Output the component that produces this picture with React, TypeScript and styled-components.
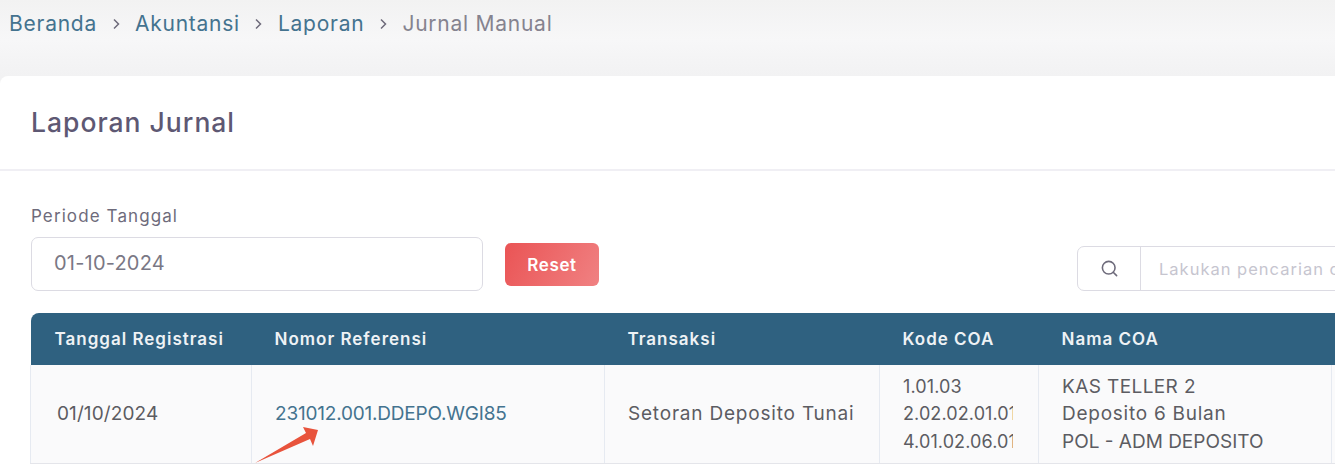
import React from "react";
import styled, { createGlobalStyle } from "styled-components";

const Global = createGlobalStyle`
  html, body { margin: 0; padding: 0; height: 464px; overflow: hidden; }
  body { font-family: Inter, "Open Sans", "Liberation Sans", sans-serif; background: #f5f6f6; }
  #root { width: 1335px; height: 464px; overflow: hidden; }
`;

const Page = styled.div`
  width: 1335px;
  height: 464px;
  overflow: hidden;
  background: linear-gradient(180deg, #f2f2f2 0%, #f7f7f8 40px, #f2f2f3 76px);
`;

const Crumbs = styled.nav`
  height: 76px;
  box-sizing: border-box;
  padding: 13px 0 0 9px;
  display: flex;
  align-items: flex-start;
  line-height: 22px;
`;

const Crumb = styled.span<{ $current?: boolean }>`
  color: ${(p) => (p.$current ? "#85838f" : "#44738f")};
  font-size: 21px;
  letter-spacing: 0.75px;
`;

const Sep = styled.span`
  width: 38px;
  display: flex;
  justify-content: center;
  align-items: center;
  height: 22px;
  color: #6e6b7b;
`;

const Card = styled.section`
  width: 1400px;
  background: #fff;
  border-radius: 8px 0 0 0;
  height: 388px;
`;

const CardHead = styled.header`
  height: 93px;
  border-bottom: 2px solid #f0eff4;
  padding-left: 31px;
  display: flex;
  align-items: center;
`;

const Title = styled.h1`
  margin: 0 0 2px;
  font-size: 26.5px;
  font-weight: 500;
  color: #5e5873;
  letter-spacing: 1px;
`;

const Body = styled.div`
  padding: 35px 0 0 30px;
`;

const FilterRow = styled.div`
  display: flex;
  align-items: flex-start;
`;

const Field = styled.div`
  margin-left: 1px;
  width: 452px;
  flex: none;
`;

const Label = styled.label`
  display: block;
  font-size: 17px;
  line-height: 20px;
  color: #6e6b7b;
  margin-bottom: 11px;
  letter-spacing: 1.1px;
`;

const DateInput = styled.div`
  box-sizing: border-box;
  height: 54px;
  border: 1.5px solid #dcdbe3;
  border-radius: 7px;
  padding: 0 0 2px 22px;
  display: flex;
  align-items: center;
  font-size: 20px;
  letter-spacing: 0.2px;
  color: #7a7885;
`;

const ResetButton = styled.button`
  margin: 37px 0 0 22px;
  width: 94px;
  height: 43px;
  flex: none;
  border: 0;
  border-radius: 6px;
  background: linear-gradient(118deg, #ea5455 0%, #f08182 100%);
  color: #fff;
  font-family: inherit;
  font-size: 17px;
  font-weight: 600;
  letter-spacing: 0.6px;
  padding: 0;
`;

const SearchGroup = styled.div`
  margin: 40px 0 0 478px;
  width: 400px;
  height: 45px;
  flex: none;
  box-sizing: border-box;
  border: 1.5px solid #dcdbe3;
  border-radius: 7px;
  display: flex;
  align-items: stretch;
`;

const SearchIcon = styled.div`
  width: 62px;
  flex: none;
  border-right: 1.5px solid #dcdbe3;
  display: flex;
  align-items: center;
  justify-content: center;
  color: #6e6b7b;
`;

const SearchText = styled.div`
  padding-left: 18px;
  display: flex;
  align-items: center;
  font-size: 16.5px;
  letter-spacing: 1px;
  color: #c6c5cf;
  white-space: nowrap;
`;

const TableWrap = styled.div`
  position: relative;
  margin-top: 22px;
`;

const Table = styled.table`
  table-layout: fixed;
  width: 1370px;
  border-collapse: collapse;
`;

const HeadRow = styled.tr`
  height: 52px;
  background: #2f6180;
`;

const Th = styled.th<{ $w: number }>`
  width: ${(p) => p.$w}px;
  padding: 0 0 0 23px;
  text-align: left;
  color: #eef2f5;
  font-size: 17px;
  font-weight: 600;
  letter-spacing: 1px;
  white-space: nowrap;
  box-sizing: border-box;
  &:first-child { border-top-left-radius: 8px; padding-left: 24px; }
`;

const Tr = styled.tr`
  height: 99px;
  background: #fafafb;
  border-bottom: 2px solid #e4e5ea;
`;

const Td = styled.td<{ $link?: boolean }>`
  padding: 0 23px;
  border-left: 1.5px solid #e6eaf1;
  font-size: 19px;
  line-height: 27.5px;
  color: ${(p) => (p.$link ? "#44738f" : "#5c5c62")};
  white-space: nowrap;
  overflow: hidden;
  box-sizing: border-box;
  &:first-child { padding-left: 26px; }
`;

const Line = styled.div<{ $ls: number }>`
  letter-spacing: ${(p) => p.$ls}px;
`;

const Clip = styled.div`
  width: 110px;
  overflow: hidden;
  font-size: 18px;
  letter-spacing: 0.1px;
`;

const Arrow = styled.svg`
  position: absolute;
  left: 222px;
  top: 112px;
  pointer-events: none;
`;

const cols = [221, 353, 275, 159, 293, 69];

const Chevron = () => (
  <Sep>
    <svg width="9" height="12" viewBox="0 0 9 12" fill="none" stroke="currentColor" strokeWidth="1.5">
      <path d="M2 1.5 6.5 6 2 10.5" />
    </svg>
  </Sep>
);

export default function App() {
  return (
    <Page>
      <Global />
      <Crumbs>
        <Crumb>Beranda</Crumb>
        <Chevron />
        <Crumb>Akuntansi</Crumb>
        <Chevron />
        <Crumb>Laporan</Crumb>
        <Chevron />
        <Crumb $current>Jurnal Manual</Crumb>
      </Crumbs>
      <Card>
        <CardHead>
          <Title>Laporan Jurnal</Title>
        </CardHead>
        <Body>
          <FilterRow>
            <Field>
              <Label>Periode Tanggal</Label>
              <DateInput>01-10-2024</DateInput>
            </Field>
            <ResetButton>Reset</ResetButton>
            <SearchGroup>
              <SearchIcon>
                <svg width="19" height="19" viewBox="0 0 24 24" fill="none" stroke="currentColor" strokeWidth="2" strokeLinecap="round">
                  <circle cx="11" cy="11" r="8" />
                  <path d="m21 21-4.3-4.3" />
                </svg>
              </SearchIcon>
              <SearchText>Lakukan pencarian data</SearchText>
            </SearchGroup>
          </FilterRow>
          <TableWrap>
            <Table>
              <thead>
                <HeadRow>
                  <Th $w={cols[0]}>Tanggal Registrasi</Th>
                  <Th $w={cols[1]}>Nomor Referensi</Th>
                  <Th $w={cols[2]}>Transaksi</Th>
                  <Th $w={cols[3]}>Kode COA</Th>
                  <Th $w={cols[4]}>Nama COA</Th>
                  <Th $w={cols[5]}></Th>
                </HeadRow>
              </thead>
              <tbody>
                <Tr>
                  <Td><Line $ls={0.1}>01/10/2024</Line></Td>
                  <Td $link><Line $ls={-0.2}>231012.001.DDEPO.WGI85</Line></Td>
                  <Td><Line $ls={0.8}>Setoran Deposito Tunai</Line></Td>
                  <Td>
                    <Clip>1.01.03<br />2.02.02.01.01<br />4.01.02.06.01</Clip>
                  </Td>
                  <Td>
                    <Line $ls={0.4}>KAS TELLER 2</Line>
                    <Line $ls={0.75}>Deposito 6 Bulan</Line>
                    <Line $ls={0}>POL - ADM DEPOSITO</Line>
                  </Td>
                  <Td></Td>
                </Tr>
              </tbody>
            </Table>
            <Arrow width="70" height="40" viewBox="0 0 70 40">
              <path d="M3 38 L54 8 L51 2 L66 5 L61 21 L58 14 Z" fill="#e8533c" />
            </Arrow>
          </TableWrap>
        </Body>
      </Card>
    </Page>
  );
}
